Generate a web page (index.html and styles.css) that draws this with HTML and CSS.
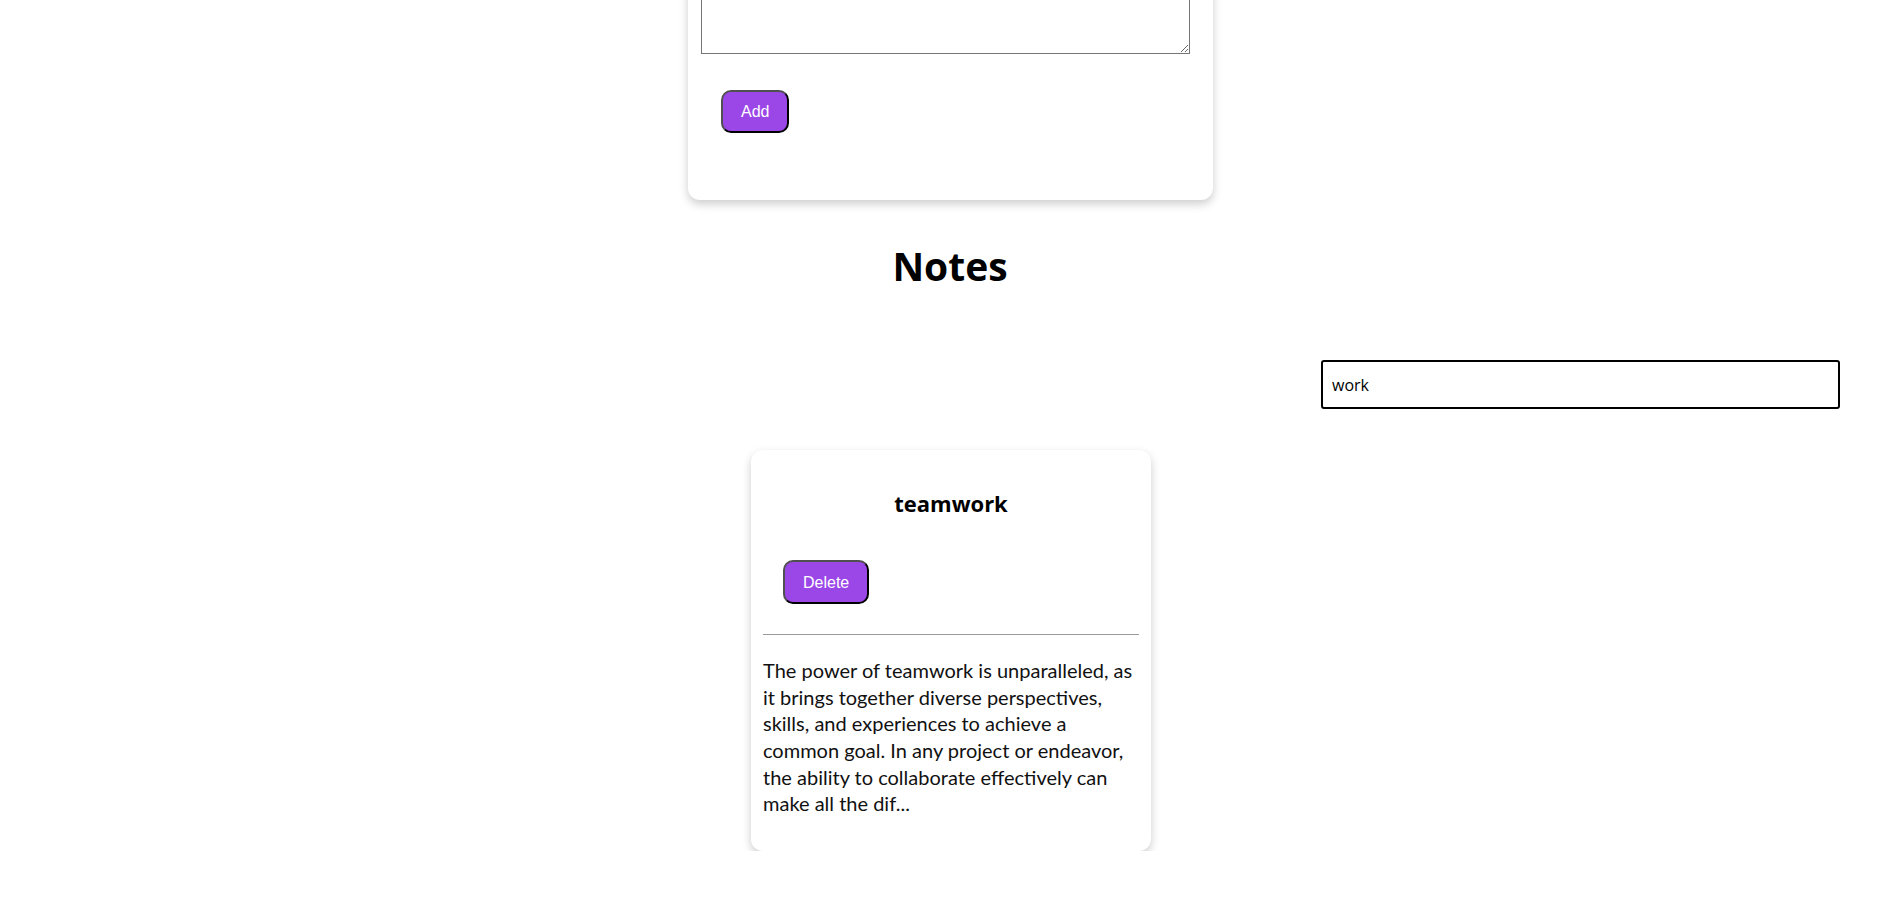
FILE: index.html
```html
<!DOCTYPE html>
<html lang="en">
<head>
<meta charset="utf-8">
<title>Notes</title>
<link rel="stylesheet" href="styles.css">
</head>
<body>
<div class="page">
  <form class="add-card">
    <textarea class="note-input" aria-label="Note description"></textarea>
    <button type="button" class="btn btn-add">Add</button>
  </form>

  <h1 class="notes-title">Notes</h1>

  <div class="search-row">
    <input class="search" type="text" value="work" aria-label="Search notes">
  </div>

  <div class="notes-list">
    <article class="note-card">
      <h3 class="note-title">teamwork</h3>
      <button type="button" class="btn btn-delete">Delete</button>
      <hr class="note-rule">
      <p class="note-body">The power of teamwork is unparalleled, as it brings together diverse perspectives, skills, and experiences to achieve a common goal. In any project or endeavor, the ability to collaborate effectively can make all the dif...</p>
    </article>
  </div>
</div>
</body>
</html>
```
FILE: styles.css
```css
html, body {
  margin: 0;
  padding: 0;
  background: #fff;
}

body {
  font-family: "Open Sans", "Noto Sans", sans-serif;
  color: #000;
  overflow: hidden;
}

.page {
  display: flex;
  flex-direction: column;
}

.add-card {
  box-sizing: border-box;
  width: 525px;
  margin: -108px 0 0 calc(50% - 262px);
  padding: 12px 23px 12px 13px;
  background: #fff;
  border-radius: 12px;
  box-shadow: 0 4px 10px rgba(0, 0, 0, 0.2);
  display: flex;
  flex-direction: column;
  align-items: flex-start;
}

.note-input {
  box-sizing: border-box;
  width: 489px;
  height: 150px;
  margin: 0;
  border: 1px solid #767676;
  font-family: "Liberation Sans", Arial, sans-serif;
  font-size: 13px;
}

.btn {
  box-sizing: border-box;
  background: #9b47e8;
  color: #fff;
  font-family: "Liberation Sans", Arial, sans-serif;
  font-size: 16px;
  line-height: 19px;
  border: 2px solid;
  border-color: #505050 #000 #000 #505050;
  border-radius: 10px;
  cursor: pointer;
}

.btn-add {
  height: 43px;
  padding: 0 18px;
  margin: 36px 0 55px 20px;
}

.notes-title {
  margin: 39px 0 0;
  text-align: center;
  font-size: 39px;
  line-height: 53px;
  font-weight: 700;
}

.search-row {
  display: flex;
  justify-content: flex-end;
  padding-right: 60px;
  margin-top: 68px;
}

.search {
  box-sizing: border-box;
  width: 519px;
  height: 49px;
  margin: 0;
  padding: 0 9px;
  border: 2px solid #000;
  border-radius: 3px;
  font-family: "Open Sans", "Noto Sans", sans-serif;
  font-size: 16px;
  color: #000;
  outline: none;
}

.notes-list {
  display: flex;
  justify-content: center;
  margin-top: 41px;
  padding-left: 2px;
}

.note-card {
  box-sizing: border-box;
  width: 400px;
  padding: 12px;
  background: #fff;
  border-radius: 12px;
  box-shadow: 0 4px 10px rgba(0, 0, 0, 0.2);
  display: flex;
  flex-direction: column;
  align-items: flex-start;
}

.note-title {
  align-self: stretch;
  margin: 26px 0 0;
  text-align: center;
  font-size: 22px;
  line-height: 30px;
  font-weight: 700;
}

.btn-delete {
  height: 44px;
  padding: 0 18px;
  margin: 42px 0 0 20px;
}

.note-rule {
  align-self: stretch;
  margin: 30px 0 0;
  border: 0;
  border-top: 1px solid #9a9a9a;
  height: 0;
}

.note-body {
  margin: 22px 0 22px;
  font-family: Lato, "Open Sans", sans-serif;
  font-size: 20px;
  line-height: 26.67px;
  color: #111;
}
```
